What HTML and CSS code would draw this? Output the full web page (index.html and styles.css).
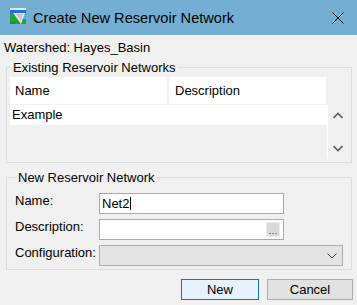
FILE: index.html
```html
<!DOCTYPE html>
<html>
<head>
<meta charset="utf-8">
<link rel="stylesheet" href="styles.css">
</head>
<body>
<div class="window">
  <div class="titlebar">
    <svg class="appicon" width="16" height="16" viewBox="0 0 16 16">
      <rect x="0" y="0" width="16" height="16" fill="#1fa43c"/>
      <rect x="0" y="0" width="16" height="2" fill="#d8f0ff"/>
      <rect x="0" y="2" width="16" height="3" fill="#1f6fe6"/>
      <rect x="12" y="5" width="4" height="6" fill="#58b0e8"/>
      <polygon points="3,5 15,5 11,16" fill="#e6e6e6"/>
      <polygon points="6,6 13,6 11,13" fill="#c8c8c8"/>
      <rect x="0" y="14" width="5" height="2" fill="#17902f"/>
    </svg>
    <span class="title">Create New Reservoir Network</span>
    <svg class="close" width="12" height="12" viewBox="0 0 12 12">
      <path d="M0.5 0.5 L11.5 11.5 M11.5 0.5 L0.5 11.5" stroke="#000" stroke-width="1" fill="none"/>
    </svg>
  </div>
  <div class="content">
    <div class="watershed">Watershed: Hayes_Basin</div>
    <fieldset class="group group-existing">
      <legend>Existing Reservoir Networks</legend>
      <div class="list">
        <div class="list-head">
          <div class="col col-name">Name</div>
          <div class="col col-desc">Description</div>
        </div>
        <div class="list-body">
          <div class="rows">
            <div class="row">Example</div>
          </div>
          <div class="scrollbar">
            <svg width="10" height="7" viewBox="0 0 10 7"><polyline points="0.5,6 5,1.5 9.5,6" fill="none" stroke="#606060" stroke-width="1.6"/></svg>
            <svg width="10" height="7" viewBox="0 0 10 7"><polyline points="0.5,1 5,5.5 9.5,1" fill="none" stroke="#606060" stroke-width="1.6"/></svg>
          </div>
        </div>
      </div>
    </fieldset>
    <fieldset class="group group-new">
      <legend>New Reservoir Network</legend>
      <div class="form">
        <label class="lbl">Name:</label>
        <div class="field field-short"><span class="val">Net2</span><span class="caret"></span></div>
        <label class="lbl">Description:</label>
        <div class="field field-short field-ell"><span class="ellbtn"><span class="dots"><i></i><i></i><i></i></span></span></div>
        <label class="lbl">Configuration:</label>
        <div class="field combo">
          <svg width="10" height="6" viewBox="0 0 10 6"><polyline points="0.5,0.5 5,5 9.5,0.5" fill="none" stroke="#404040" stroke-width="1"/></svg>
        </div>
      </div>
    </fieldset>
    <div class="buttons">
      <button class="btn btn-default">New</button>
      <button class="btn">Cancel</button>
    </div>
  </div>
</div>
</body>
</html>
```
FILE: styles.css
```css
html, body {
  margin: 0;
  padding: 0;
}
body {
  background: #f0f0f0;
  font-family: "Liberation Sans", Arial, sans-serif;
  font-size: 13px;
  color: #000;
}
.window {
  width: 357px;
  height: 305px;
  display: flex;
  flex-direction: column;
  overflow: hidden;
}
.titlebar {
  height: 35px;
  background: #74afd3;
  display: flex;
  align-items: center;
  padding-left: 10px;
  flex: none;
}
.appicon {
  flex: none;
  align-self: flex-start;
  margin-top: 8px;
}
.title {
  margin-left: 7px;
  font-size: 14.6px;
  color: #000;
}
.close {
  margin-left: auto;
  margin-right: 13px;
  flex: none;
}
.content {
  display: flex;
  flex-direction: column;
}
.watershed {
  margin: 4px 0 0 4px;
  height: 17px;
  line-height: 17px;
}
.group {
  margin: 0 5px 0 6px;
  border: 1px solid #dcdcdc;
  min-width: 0;
}
.group legend {
  margin-left: 1px;
  padding: 0 2px;
  line-height: 15px;
  height: 15px;
}
.group-existing {
  margin-top: 4px;
  padding: 2px 5px 3px 3px;
}
.list {
  height: 82px;
  display: flex;
  flex-direction: column;
}
.list-head {
  display: flex;
  height: 27px;
  width: 316px;
  gap: 2px;
  flex: none;
}
.col {
  background: #fff;
  line-height: 27px;
  white-space: nowrap;
}
.col-name {
  width: 157px;
  padding-left: 5px;
  box-sizing: border-box;
}
.col-desc {
  flex: 1;
  padding-left: 6px;
}
.list-body {
  margin-top: 1px;
  flex: 1;
  display: flex;
}
.rows {
  flex: 1;
}
.row {
  background: #fff;
  height: 20px;
  line-height: 20px;
  padding-left: 2px;
}
.scrollbar {
  width: 17px;
  border-left: 1px solid #fff;
  display: flex;
  flex-direction: column;
  justify-content: space-between;
  align-items: center;
  padding: 7px 0 7px 1px;
}
.scrollbar svg {
  display: block;
}
.group-new {
  margin-top: 7px;
  padding: 8px 8px 3px 8px;
}
.form {
  display: grid;
  grid-template-columns: 84px 185px;
  grid-auto-rows: 21px;
  row-gap: 5px;
  align-items: start;
}
.lbl {
  line-height: 15px;
  white-space: nowrap;
}
.field {
  height: 21px;
  box-sizing: border-box;
  border: 1px solid #a9a9a9;
  background: #fff;
  display: flex;
  align-items: center;
}
.val {
  padding-left: 2px;
  line-height: 15px;
}
.caret {
  width: 1px;
  height: 13px;
  background: #000;
  margin-left: 1px;
}
.field-ell {
  justify-content: flex-end;
}
.ellbtn {
  width: 14px;
  height: 15px;
  box-sizing: border-box;
  background: #d9d9d9;
  border: 1px solid #ebebeb;
  margin-right: 3px;
  display: flex;
  align-items: flex-end;
  justify-content: center;
}
.dots {
  display: flex;
  gap: 1px;
  margin-bottom: 2px;
}
.dots i {
  display: block;
  width: 2px;
  height: 1px;
  background: #b08a3e;
}
.combo {
  width: 244px;
  background: #e3e3e3;
  border-color: #adadad;
  justify-content: flex-end;
}
.combo svg {
  margin-right: 5px;
  margin-top: 1px;
}
.buttons {
  display: flex;
  justify-content: flex-end;
  gap: 8px;
  margin-top: 9px;
  margin-right: 4px;
}
.btn {
  height: 21px;
  box-sizing: border-box;
  border: 1px solid #adadad;
  background: #e1e1e1;
  font-family: "Liberation Sans", Arial, sans-serif;
  font-size: 13px;
  color: #000;
  padding: 0;
  width: 86px;
  margin: 0;
}
.btn-default {
  width: 78px;
  border-color: #0078d7;
  background: #e5f1fb;
}
```
